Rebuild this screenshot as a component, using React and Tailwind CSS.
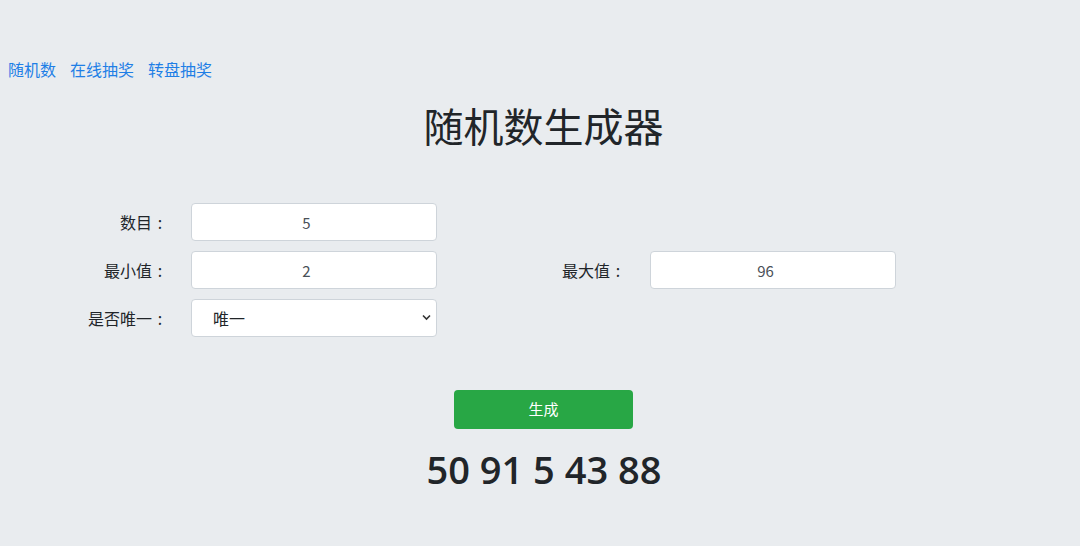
export default function App() {
  const font = { fontFamily: '"Noto Sans CJK SC", "Open Sans", sans-serif' };
  const labelCls = "flex justify-end text-[16px] text-[#212529] leading-[38px]";
  const inputCls =
    "h-[38px] w-[246px] rounded-[4px] border border-[#ced4da] bg-white text-center text-[15px] text-[#495057] outline-none";
  const Label = ({ text, w, ml }) => (
    <label className={`${labelCls} ${w} ${ml || ""}`}>
      <span>{text}</span>
      <span className="w-[16px] text-center">:</span>
    </label>
  );
  return (
    <div className="min-h-[546px] w-[1080px] bg-[#e9ecef]" style={font}>
      <nav className="flex gap-[14px] pl-[8px] pt-[57px] text-[16px] leading-[24px] text-[#1f7fe6]">
        <a href="#">随机数</a>
        <a href="#">在线抽奖</a>
        <a href="#">转盘抽奖</a>
      </nav>
      <h1 className="mt-[20px] pl-[7px] text-center text-[40px] leading-[48px] font-normal text-[#212529]">
        随机数生成器
      </h1>
      <div className="mt-[54px] flex flex-col gap-[10px]">
        <div className="flex items-center">
          <Label text="数目" w="w-[168px]" />
          <input type="number" className={`ml-[23px] ${inputCls}`} defaultValue="5" />
        </div>
        <div className="flex items-center">
          <Label text="最小值" w="w-[168px]" />
          <input type="number" className={`ml-[23px] ${inputCls}`} defaultValue="2" />
          <Label text="最大值" w="w-[189px]" />
          <input type="number" className={`ml-[24px] ${inputCls}`} defaultValue="96" />
        </div>
        <div className="flex items-center">
          <Label text="是否唯一" w="w-[168px]" />
          <div className="relative ml-[23px]">
            <select className="h-[38px] w-[246px] appearance-none rounded-[4px] border border-[#ced4da] bg-white pl-[21px] text-[16px] text-[#212529] outline-none">
              <option>唯一</option>
              <option>不唯一</option>
            </select>
            <svg
              className="pointer-events-none absolute right-[6px] top-[15px]"
              width="9"
              height="7"
              viewBox="0 0 9 7"
            >
              <path d="M1 1.5 L4.5 5 L8 1.5" fill="none" stroke="#333" strokeWidth="1.6" />
            </svg>
          </div>
        </div>
      </div>
      <div className="mt-[53px] flex justify-center pl-[7px]">
        <button className="h-[39px] w-[179px] rounded-[4px] bg-[#28a745] text-[15px] text-white">
          生成
        </button>
      </div>
      <div
        className="mt-[15px] pl-[8px] text-center text-[38px] font-semibold leading-[50px] text-[#212529]"
        style={{ fontFamily: '"Open Sans", sans-serif' }}
      >
        50 91 5 43 88
      </div>
    </div>
  );
}
